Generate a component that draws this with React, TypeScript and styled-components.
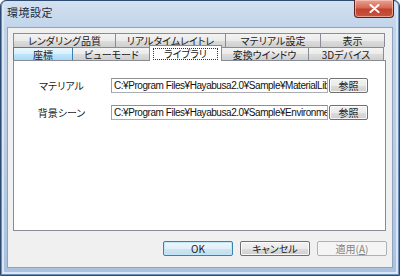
import React from 'react';
import styled, { createGlobalStyle, css } from 'styled-components';

const GlobalStyle = createGlobalStyle`
  html, body {
    margin: 0;
    padding: 0;
    width: 400px;
    height: 276px;
    overflow: hidden;
    background: #ffffff;
  }
  * {
    box-sizing: border-box;
  }
`;

const uiFont = `"Noto Sans CJK JP", "Liberation Sans", sans-serif`;

const Window = styled.div`
  width: 400px;
  height: 276px;
  display: flex;
  flex-direction: column;
  padding: 0 6px 7px 6px;
  border: 1px solid #2c4a72;
  border-radius: 6px 6px 0 0;
  background: linear-gradient(
    180deg,
    #d3e1f0 0px,
    #c1d4ea 26px,
    #b7cbe3 60%,
    #aac2df 100%
  );
  box-shadow: inset 1px 0 0 #6f8fb8, inset -1px 0 0 #6f8fb8, inset 0 -1px 0 #6f8fb8,
    inset 3px 0 0 #d9e6f4, inset -3px 0 0 #d9e6f4, inset 0 -3px 0 #d9e6f4;
  font-family: ${uiFont};
  font-feature-settings: 'palt';
  position: relative;
`;

const TitleBar = styled.div`
  height: 26px;
  display: flex;
  align-items: flex-start;
  padding-top: 4px;
`;

const Title = styled.div`
  font-size: 11px;
  line-height: 14px;
  color: #1b2a3d;
  letter-spacing: 0.5px;
`;

const CloseButton = styled.div`
  position: absolute;
  top: -1px;
  right: 5px;
  width: 40px;
  height: 18px;
  border: 1px solid #5b2020;
  border-top: none;
  border-radius: 0 0 4px 4px;
  background: linear-gradient(180deg, #e8a493 0%, #d66a56 45%, #c2412f 55%, #c8553e 100%);
  box-shadow: inset 0 0 0 1px rgba(255, 210, 200, 0.6);
  display: flex;
  align-items: center;
  justify-content: center;
`;

const Client = styled.div`
  flex: 1;
  display: flex;
  flex-direction: column;
  background: #f0f0f0;
  border: 1px solid #8ea3bd;
  padding: 5px 6px 0 5px;
`;

const TabRow = styled.div<{ $front?: boolean }>`
  display: flex;
  height: ${(p) => (p.$front ? 13 : 14)}px;
  position: relative;
  z-index: ${(p) => (p.$front ? 2 : 1)};
`;

const Tab = styled.div<{ $w: number; $hover?: boolean; $active?: boolean }>`
  width: ${(p) => p.$w}px;
  flex: none;
  display: flex;
  align-items: center;
  justify-content: center;
  white-space: nowrap;
  font-size: 10px;
  color: #1a1a1a;
  border: 1px solid #898c95;
  border-bottom: none;
  margin-right: -1px;
  background: linear-gradient(180deg, #f3f3f3 0%, #ebebeb 50%, #dddddd 51%, #cfcfcf 100%);
  position: relative;
  ${(p) =>
    p.$hover &&
    css`
      background: linear-gradient(180deg, #eaf6fd 0%, #d9f0fc 50%, #bee6fd 51%, #a7d9f5 100%);
      border-color: #3c7fb1;
      z-index: 1;
    `}
  ${(p) =>
    p.$active &&
    css`
      background: #ffffff;
      margin-top: -2px;
      height: calc(100% + 3px);
      margin-left: -1px;
      margin-right: -2px;
      width: ${p.$w + 2}px;
      z-index: 3;
      padding-top: 1px;
    `}
`;

const FocusLabel = styled.span`
  border: 1px dotted #333333;
  width: 65px;
  height: 12px;
  line-height: 10px;
  display: flex;
  align-items: center;
  justify-content: center;
  white-space: nowrap;
`;

const Panel = styled.div`
  height: 171px;
  background: #ffffff;
  border: 1px solid #898c95;
  display: flex;
  flex-direction: column;
  gap: 12px;
  padding: 17px 0 0 0;
`;

const FieldRow = styled.div`
  display: flex;
  align-items: center;
  height: 15px;
`;

const Label = styled.div`
  width: 97px;
  flex: none;
  text-align: center;
  font-size: 10px;
  color: #1a1a1a;
  padding-right: 2px;
`;

const PathInput = styled.div`
  width: 217px;
  height: 15px;
  flex: none;
  border: 1px solid #abadb3;
  border-top-color: #8e8f8f;
  border-left-color: #a0a0a0;
  background: #ffffff;
  font-family: "Liberation Sans", sans-serif;
  font-size: 10px;
  line-height: 13px;
  color: #111111;
  padding-left: 2px;
  overflow: hidden;
  white-space: nowrap;
  letter-spacing: -0.45px;
`;

const buttonFace = css`
  border: 1px solid #707070;
  border-radius: 2px;
  background: linear-gradient(180deg, #f2f2f2 0%, #ebebeb 50%, #dddddd 51%, #cfcfcf 100%);
  box-shadow: inset 0 0 0 1px rgba(255, 255, 255, 0.8);
  display: flex;
  align-items: center;
  justify-content: center;
  font-family: ${uiFont};
  font-size: 10px;
  color: #1a1a1a;
  flex: none;
`;

const BrowseButton = styled.div`
  ${buttonFace};
  width: 39px;
  height: 15px;
  margin-left: 1px;
`;

const ButtonBar = styled.div`
  display: flex;
  justify-content: flex-end;
  gap: 7px;
  padding: 10px 0 0 0;
  margin-right: -1px;
`;

const DialogButton = styled.div<{ $default?: boolean; $disabled?: boolean }>`
  ${buttonFace};
  width: 70px;
  height: 15px;
  ${(p) =>
    p.$default &&
    css`
      border-color: #3c7fb1;
      box-shadow: inset 0 0 0 1px #bfe6f9;
      background: linear-gradient(180deg, #edf6fb 0%, #e3f0f8 50%, #cfe5f2 51%, #c3dded 100%);
    `}
  ${(p) =>
    p.$disabled &&
    css`
      border-color: #adb2b5;
      background: #f4f4f4;
      box-shadow: none;
      color: #838383;
    `}
`;

const Mnemonic = styled.span`
  text-decoration: underline;
`;

export default function App() {
  return (
    <>
      <GlobalStyle />
      <Window>
        <TitleBar>
          <Title>環境設定</Title>
        </TitleBar>
        <CloseButton>
          <svg width="11" height="9" viewBox="0 0 11 9">
            <path d="M1.5 1 L9.5 8 M9.5 1 L1.5 8" stroke="#ffffff" strokeWidth="2" strokeLinecap="round" />
          </svg>
        </CloseButton>
        <Client>
          <TabRow>
            <Tab $w={103}>レンダリング品質</Tab>
            <Tab $w={111}>リアルタイムレイトレ</Tab>
            <Tab $w={96}>マテリアル設定</Tab>
            <Tab $w={65}>表示</Tab>
          </TabRow>
          <TabRow $front>
            <Tab $w={60} $hover>座標</Tab>
            <Tab $w={79}>ビューモード</Tab>
            <Tab $w={71} $active>
              <FocusLabel>ライブラリ</FocusLabel>
            </Tab>
            <Tab $w={89}>変換ウインドウ</Tab>
            <Tab $w={76}>3Dデバイス</Tab>
          </TabRow>
          <Panel>
            <FieldRow>
              <Label>マテリアル</Label>
              <PathInput>C:¥Program Files¥Hayabusa2.0¥Sample¥MaterialLib¥</PathInput>
              <BrowseButton>参照</BrowseButton>
            </FieldRow>
            <FieldRow>
              <Label>背景シーン</Label>
              <PathInput>C:¥Program Files¥Hayabusa2.0¥Sample¥Environment¥</PathInput>
              <BrowseButton>参照</BrowseButton>
            </FieldRow>
          </Panel>
          <ButtonBar>
            <DialogButton $default>OK</DialogButton>
            <DialogButton>キャンセル</DialogButton>
            <DialogButton $disabled>
              適用(<Mnemonic>A</Mnemonic>)
            </DialogButton>
          </ButtonBar>
        </Client>
      </Window>
    </>
  );
}
